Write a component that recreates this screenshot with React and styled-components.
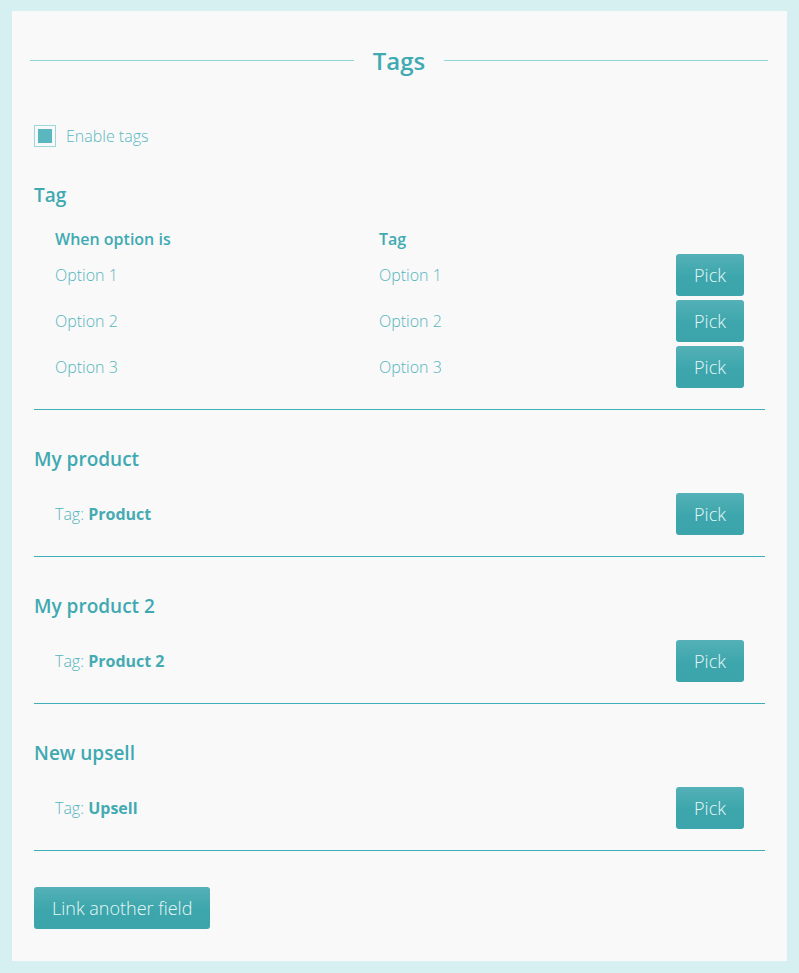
import React from "react";
import styled, { createGlobalStyle } from "styled-components";

const Global = createGlobalStyle`
  html, body { margin: 0; padding: 0; }
  body {
    background: #d6f0f1;
    font-family: "Open Sans", "Noto Sans", sans-serif;
    color: #5bb8bf;
  }
`;

const Page = styled.div`
  padding: 11px 12px 12px 12px;
`;

const Card = styled.div`
  background: #f9f9f9;
  padding: 34px 22px 32px 22px;
  box-sizing: border-box;
  min-height: 950px;
`;

const TitleRow = styled.div`
  display: flex;
  align-items: center;
  gap: 19px;
  margin: 0 -4px 0 -4px;
  padding-right: 1px;
`;

const TitleLine = styled.div`
  flex: 1;
  height: 1px;
  background: #8fd6d9;
  margin-top: -1px;
`;

const Title = styled.h1`
  margin: 0;
  font-size: 24px;
  line-height: 32px;
  font-weight: 600;
  color: #40aab3;
`;

const CheckRow = styled.label`
  display: flex;
  align-items: center;
  gap: 10px;
  margin-top: 48px;
  font-size: 16px;
  font-weight: 300;
  line-height: 22px;
  color: #5bb8bf;
`;

const CheckBox = styled.span`
  width: 22px;
  height: 22px;
  box-sizing: border-box;
  border: 1px solid #9ad8db;
  padding: 3px;
  display: flex;
  &::after {
    content: "";
    flex: 1;
    background: #5ab7bf;
  }
`;

const Section = styled.section`
  padding: ${(p) => (p.$first ? "34px" : "35px")} 0 21px 0;
  border-bottom: 1px solid #3eafb7;
`;

const Heading = styled.h2`
  margin: 0 0 ${(p) => p.$mb || 20}px 0;
  font-size: 19px;
  line-height: 28px;
  font-weight: 600;
  color: #3fa9b2;
`;

const Table = styled.div`
  display: grid;
  grid-template-columns: 324px 1fr 68px;
  row-gap: 4px;
  padding: 0 21px;
  align-items: center;
`;

const HeadCell = styled.div`
  font-size: 16px;
  font-weight: 600;
  line-height: 24px;
  color: #40aab3;
  margin-bottom: -1px;
`;

const Cell = styled.div`
  font-size: 16px;
  font-weight: 300;
  line-height: 22px;
  color: #55b5bd;
`;

const TagRow = styled.div`
  display: flex;
  align-items: center;
  justify-content: space-between;
  padding: 0 21px;
`;

const TagText = styled.div`
  font-size: 16px;
  font-weight: 300;
  color: #55b5bd;
  b {
    font-weight: 700;
    color: #44abb3;
  }
`;

const Button = styled.button`
  height: 42px;
  padding: 0 ${(p) => (p.$wide ? "18px" : "0")};
  width: ${(p) => (p.$wide ? "auto" : "68px")};
  border: none;
  border-radius: 3px;
  background: linear-gradient(#54b1b7, #3ca6ac 55%, #3ba5ab);
  color: #e8f7f7;
  font-family: "Open Sans", "Noto Sans", sans-serif;
  font-size: 18px;
  font-weight: 300;
  cursor: pointer;
`;

const Footer = styled.div`
  margin-top: 36px;
`;

const options = ["Option 1", "Option 2", "Option 3"];
const products = [
  { name: "My product", tag: "Product" },
  { name: "My product 2", tag: "Product 2" },
  { name: "New upsell", tag: "Upsell" },
];

export default function App() {
  return (
    <>
      <Global />
      <Page>
        <Card>
          <TitleRow>
            <TitleLine />
            <Title>Tags</Title>
            <TitleLine />
          </TitleRow>
          <CheckRow>
            <CheckBox />
            Enable tags
          </CheckRow>
          <Section $first>
            <Heading $mb={18}>Tag</Heading>
            <Table>
              <HeadCell>When option is</HeadCell>
              <HeadCell>Tag</HeadCell>
              <div />
              {options.map((o) => (
                <React.Fragment key={o}>
                  <Cell>{o}</Cell>
                  <Cell>{o}</Cell>
                  <Button>Pick</Button>
                </React.Fragment>
              ))}
            </Table>
          </Section>
          {products.map((p) => (
            <Section key={p.name}>
              <Heading>{p.name}</Heading>
              <TagRow>
                <TagText>
                  Tag: <b>{p.tag}</b>
                </TagText>
                <Button>Pick</Button>
              </TagRow>
            </Section>
          ))}
          <Footer>
            <Button $wide>Link another field</Button>
          </Footer>
        </Card>
      </Page>
    </>
  );
}
